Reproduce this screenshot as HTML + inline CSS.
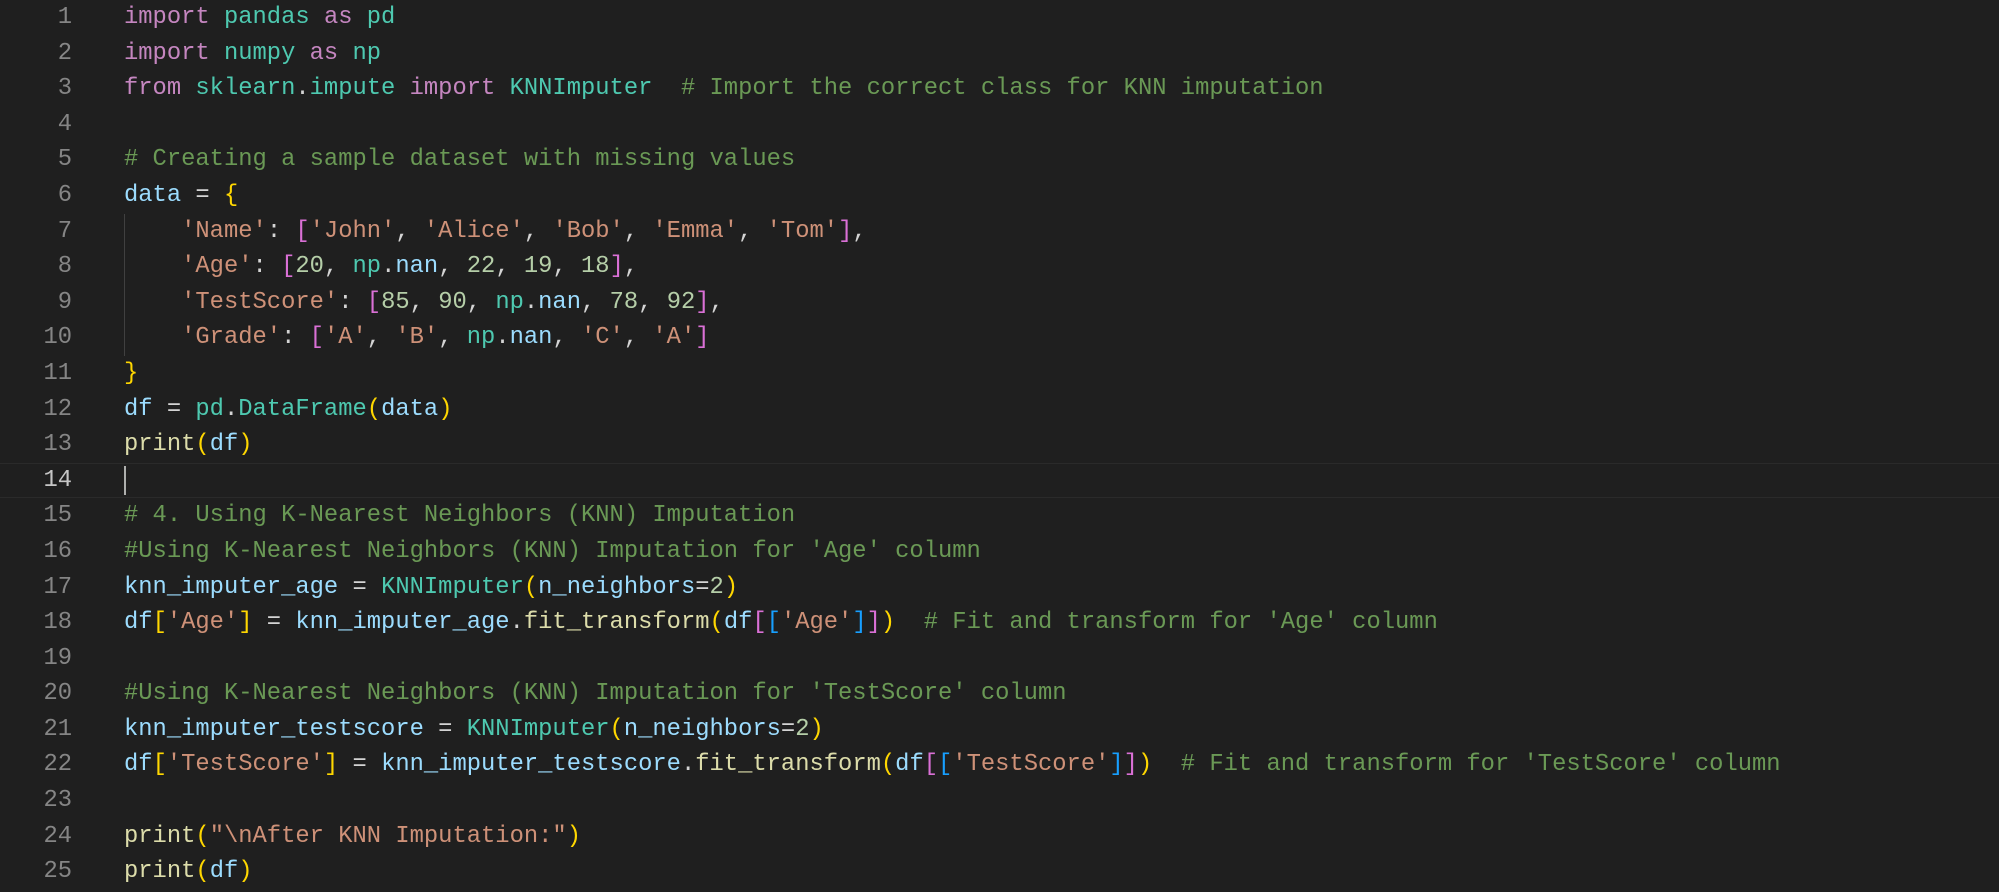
<!DOCTYPE html>
<html><head><meta charset="utf-8"><style>
html,body{margin:0;padding:0;background:#1f1f1f;width:1999px;height:892px;overflow:hidden}
.ed{position:relative;font-family:"Liberation Mono","DejaVu Sans Mono",monospace;font-size:23.8px;line-height:35.6px;color:#d4d4d4;height:892px}
.ln{position:absolute;left:0;top:0;width:72px;text-align:right;color:#858585}
.cd{position:absolute;left:124px;top:0}
.row{height:35.6px;white-space:pre}
.k{color:#c586c0}.m{color:#4ec9b0}.v{color:#9cdcfe}.s{color:#ce9178}.n{color:#b5cea8}.c{color:#6a9955}.f{color:#dcdcaa}
.b1{color:#ffd700}.b2{color:#da70d6}.b3{color:#179fff}
.hl{position:absolute;left:0;right:0;top:462.8px;height:33px;border-top:1px solid #2a2a2a;border-bottom:1px solid #2a2a2a}
.cursor{position:absolute;left:124px;top:466px;width:2px;height:29px;background:#aeafad}
.guide{position:absolute;left:124px;top:213.6px;width:1px;height:142.4px;background:#404040}
</style></head><body><div class="ed"><div class="hl"></div><div class="guide"></div><div class="cursor"></div><div class="ln"><div class="row">1</div><div class="row">2</div><div class="row">3</div><div class="row">4</div><div class="row">5</div><div class="row">6</div><div class="row">7</div><div class="row">8</div><div class="row">9</div><div class="row">10</div><div class="row">11</div><div class="row">12</div><div class="row">13</div><div class="row" style="color:#c6c6c6">14</div><div class="row">15</div><div class="row">16</div><div class="row">17</div><div class="row">18</div><div class="row">19</div><div class="row">20</div><div class="row">21</div><div class="row">22</div><div class="row">23</div><div class="row">24</div><div class="row">25</div></div><div class="cd"><div class="row"><span class="k">import</span> <span class="m">pandas</span> <span class="k">as</span> <span class="m">pd</span></div><div class="row"><span class="k">import</span> <span class="m">numpy</span> <span class="k">as</span> <span class="m">np</span></div><div class="row"><span class="k">from</span> <span class="m">sklearn</span>.<span class="m">impute</span> <span class="k">import</span> <span class="m">KNNImputer</span>  <span class="c"># Import the correct class for KNN imputation</span></div><div class="row"> </div><div class="row"><span class="c"># Creating a sample dataset with missing values</span></div><div class="row"><span class="v">data</span> = <span class="b1">{</span></div><div class="row">    <span class="s">'Name'</span>: <span class="b2">[</span><span class="s">'John'</span>, <span class="s">'Alice'</span>, <span class="s">'Bob'</span>, <span class="s">'Emma'</span>, <span class="s">'Tom'</span><span class="b2">]</span>,</div><div class="row">    <span class="s">'Age'</span>: <span class="b2">[</span><span class="n">20</span>, <span class="m">np</span>.<span class="v">nan</span>, <span class="n">22</span>, <span class="n">19</span>, <span class="n">18</span><span class="b2">]</span>,</div><div class="row">    <span class="s">'TestScore'</span>: <span class="b2">[</span><span class="n">85</span>, <span class="n">90</span>, <span class="m">np</span>.<span class="v">nan</span>, <span class="n">78</span>, <span class="n">92</span><span class="b2">]</span>,</div><div class="row">    <span class="s">'Grade'</span>: <span class="b2">[</span><span class="s">'A'</span>, <span class="s">'B'</span>, <span class="m">np</span>.<span class="v">nan</span>, <span class="s">'C'</span>, <span class="s">'A'</span><span class="b2">]</span></div><div class="row"><span class="b1">}</span></div><div class="row"><span class="v">df</span> = <span class="m">pd</span>.<span class="m">DataFrame</span><span class="b1">(</span><span class="v">data</span><span class="b1">)</span></div><div class="row"><span class="f">print</span><span class="b1">(</span><span class="v">df</span><span class="b1">)</span></div><div class="row"> </div><div class="row"><span class="c"># 4. Using K-Nearest Neighbors (KNN) Imputation</span></div><div class="row"><span class="c">#Using K-Nearest Neighbors (KNN) Imputation for 'Age' column</span></div><div class="row"><span class="v">knn_imputer_age</span> = <span class="m">KNNImputer</span><span class="b1">(</span><span class="v">n_neighbors</span>=<span class="n">2</span><span class="b1">)</span></div><div class="row"><span class="v">df</span><span class="b1">[</span><span class="s">'Age'</span><span class="b1">]</span> = <span class="v">knn_imputer_age</span>.<span class="f">fit_transform</span><span class="b1">(</span><span class="v">df</span><span class="b2">[</span><span class="b3">[</span><span class="s">'Age'</span><span class="b3">]</span><span class="b2">]</span><span class="b1">)</span>  <span class="c"># Fit and transform for 'Age' column</span></div><div class="row"> </div><div class="row"><span class="c">#Using K-Nearest Neighbors (KNN) Imputation for 'TestScore' column</span></div><div class="row"><span class="v">knn_imputer_testscore</span> = <span class="m">KNNImputer</span><span class="b1">(</span><span class="v">n_neighbors</span>=<span class="n">2</span><span class="b1">)</span></div><div class="row"><span class="v">df</span><span class="b1">[</span><span class="s">'TestScore'</span><span class="b1">]</span> = <span class="v">knn_imputer_testscore</span>.<span class="f">fit_transform</span><span class="b1">(</span><span class="v">df</span><span class="b2">[</span><span class="b3">[</span><span class="s">'TestScore'</span><span class="b3">]</span><span class="b2">]</span><span class="b1">)</span>  <span class="c"># Fit and transform for 'TestScore' column</span></div><div class="row"> </div><div class="row"><span class="f">print</span><span class="b1">(</span><span class="s">"\nAfter KNN Imputation:"</span><span class="b1">)</span></div><div class="row"><span class="f">print</span><span class="b1">(</span><span class="v">df</span><span class="b1">)</span></div></div></div></body></html>
